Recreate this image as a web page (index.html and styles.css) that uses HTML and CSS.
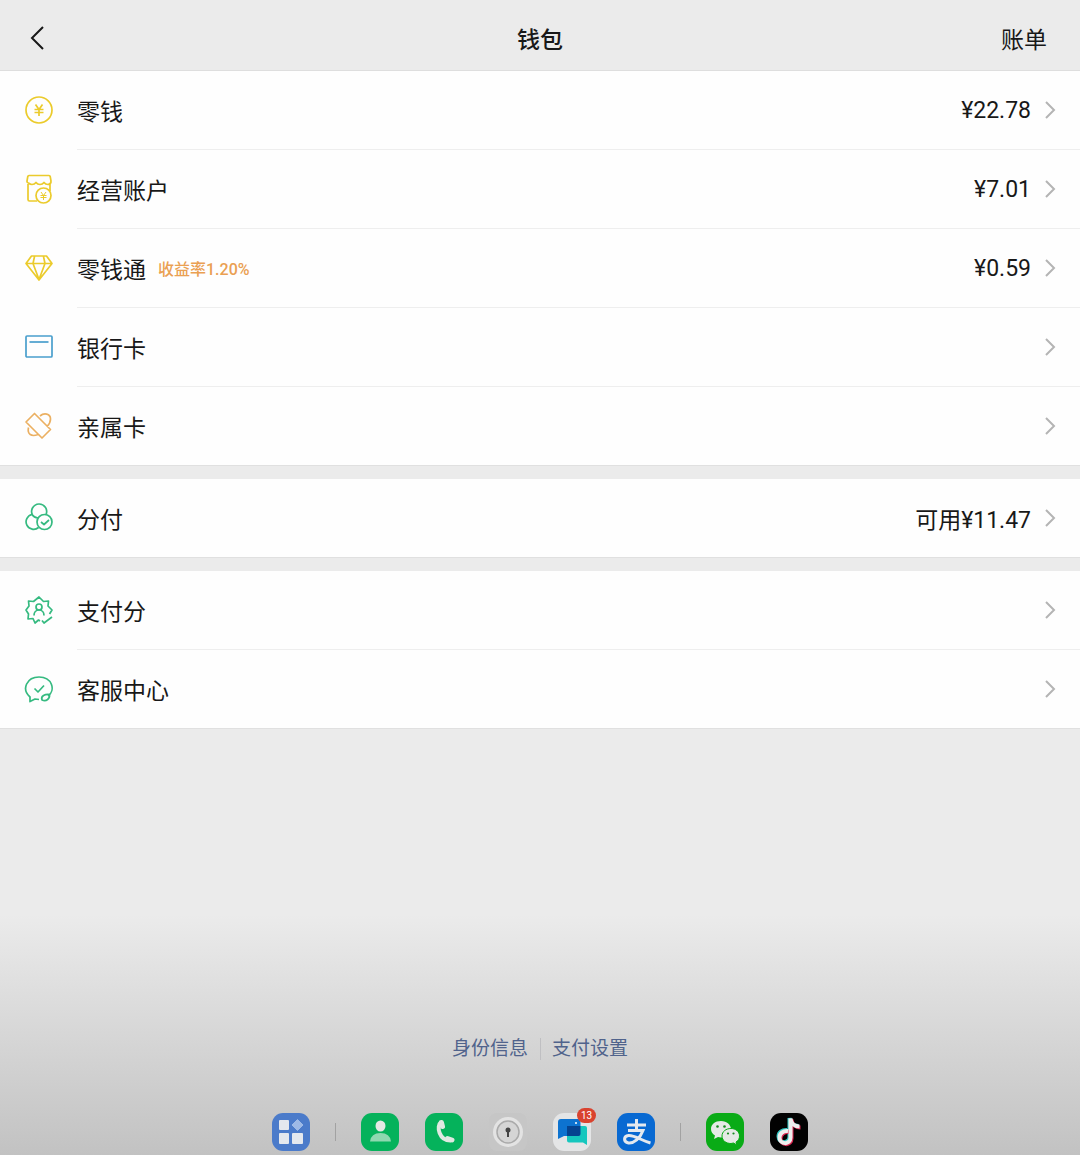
FILE: index.html
```html
<!DOCTYPE html>
<html lang="zh-CN">
<head>
  <meta charset="UTF-8">
  <meta name="viewport" content="width=device-width, initial-scale=1">
  <title>钱包</title>
  <link rel="stylesheet" href="styles.css">
</head>
<body>
  <svg class="defs" aria-hidden="true">
    <symbol id="chevron" viewBox="0 0 12 20">
      <path d="M2 2l8 8-8 8" fill="none" stroke="currentColor" stroke-width="2"/>
    </symbol>
  </svg>

  <header class="header">
    <button class="back" aria-label="返回">
      <svg width="16" height="26" viewBox="0 0 16 26"><path d="M14 2L3 13l11 11" fill="none" stroke="currentColor" stroke-width="2"/></svg>
    </button>
    <h1 class="title">钱包</h1>
    <a class="bill" href="#">账单</a>
  </header>

  <main class="main">
    <nav class="group">
      <a class="row" href="#">
        <svg class="icon yellow" viewBox="0 0 30 30"><circle cx="15" cy="15" r="13"/><path d="M11.5 9.5l3.5 5 3.5-5M15 14.5V21M10.5 14.5h9M10.5 17.5h9"/></svg>
        <span class="cell"><span class="label">零钱</span><span class="value">¥22.78</span><svg class="arrow"><use href="#chevron"/></svg></span>
      </a>
      <a class="row" href="#">
        <svg class="icon yellow" viewBox="0 0 30 30"><path d="M13 27H5.5Q4 27 4 25.500V10M26 10v7M5 1.500h20q1 0 1.200 1l.8 4.500q.3 3-3 3.500-2.500 0-4-2-1.500 2-4 2t-4-2q-1.500 2-4 2-2 0-3.200-1.300Q2.700 8.500 3 7l.8-4.500q.2-1 1.200-1z"/><circle cx="19.500" cy="21.500" r="7.500"/><path class="thin" d="M17 18l2.500 3.500L22 18M19.500 21.500V26M16.500 21.500h6M16.500 23.500h6"/></svg>
        <span class="cell"><span class="label">经营账户</span><span class="value">¥7.01</span><svg class="arrow"><use href="#chevron"/></svg></span>
      </a>
      <a class="row" href="#">
        <svg class="icon yellow" viewBox="0 0 30 30"><path d="M7.500 3h15L28 10.500 15 27 2 10.500zM2 10.500h26M10.500 3.500L9 10.500l6 16 6-16-1.500-7"/></svg>
        <span class="cell"><span class="label">零钱通</span><span class="rate">收益率1.20%</span><span class="value">¥0.59</span><svg class="arrow"><use href="#chevron"/></svg></span>
      </a>
      <a class="row" href="#">
        <svg class="icon blue" viewBox="0 0 30 30"><rect x="2" y="4" width="26" height="21" rx="1"/><path d="M5.500 10h19"/></svg>
        <span class="cell"><span class="label">银行卡</span><svg class="arrow"><use href="#chevron"/></svg></span>
      </a>
      <a class="row" href="#">
        <svg class="icon orange" viewBox="0 0 30 30"><path d="M2 11l8.500-8.500 16 16L18 27zM22.500 14.500l4 4-8.500 8.500-3.500-3.500M16 5c4-3.500 10.500-2.500 10.500 3 0 3-1 5-3.500 7.500M4.500 16.500c-1.500 7 3 9.500 9.500 7"/></svg>
        <span class="cell"><span class="label">亲属卡</span><svg class="arrow"><use href="#chevron"/></svg></span>
      </a>
    </nav>

    <nav class="group">
      <a class="row" href="#">
        <svg class="icon green" viewBox="0 0 30 30"><path d="M8.500 12a7.500 7.500 0 1 1 13.500-.5M8 11.500a7.500 7.500 0 1 0 6.500 13M8 11.500q2 3 6 3.500"/><circle cx="20.500" cy="19" r="7.500"/><path d="M17 19l3 2.500 5-4.500"/></svg>
        <span class="cell"><span class="label">分付</span><span class="value">可用¥11.47</span><svg class="arrow"><use href="#chevron"/></svg></span>
      </a>
    </nav>

    <nav class="group">
      <a class="row" href="#">
        <svg class="icon green" viewBox="0 0 30 30"><path d="M16 26l-1.500-1-3.500 3-2-4.500-5 .5.500-5L2 15l3-4-.5-5 5 .5L15 2l4.500 4.500 5-.5-.5 5 4 4-2.500 4M18 25.500l2 2.500 8-6"/><circle cx="15" cy="12" r="3"/><path d="M10 20.500c0-3 2-5.500 5-5.500s5 2.500 5 5.500"/></svg>
        <span class="cell"><span class="label">支付分</span><svg class="arrow"><use href="#chevron"/></svg></span>
      </a>
      <a class="row" href="#">
        <svg class="icon green" viewBox="0 0 30 30"><path d="M15 25.500l-4-.5-5 2.500V23C-3 15 3 3 15 3c13 0 17 13 9 19M10.500 14.500l3.500 3.500 6-6.500"/><path d="M18 26c-1.500-4 3-6 7.500-5.500.5 4-3 7.500-7.500 5.500z"/></svg>
        <span class="cell"><span class="label">客服中心</span><svg class="arrow"><use href="#chevron"/></svg></span>
      </a>
    </nav>
  </main>

  <footer class="footer">
    <div class="links">
      <a href="#">身份信息</a>
      <a href="#">支付设置</a>
    </div>

    <div class="dock">
      <button class="app" aria-label="应用">
        <svg viewBox="0 0 40 40"><rect x="1" y="1" width="38" height="38" rx="11" fill="#4b7bca"/><g fill="#e4e8ee"><rect x="8" y="8" width="10" height="10" rx="1"/><rect x="8" y="21" width="10" height="11" rx="1"/><rect x="21" y="21" width="11" height="11" rx="1"/></g><path d="M26.500 7.500l5.500 5.500-5.500 5.500L21 13z" fill="#9db9e6" stroke="#9db9e6" stroke-linejoin="round"/></svg>
      </button>
      <span class="bar"></span>
      <button class="app" aria-label="联系人">
        <svg viewBox="0 0 40 40"><rect x="1" y="1" width="38" height="38" rx="11" fill="#05b25b"/><ellipse cx="20.500" cy="14" rx="5" ry="5.500" fill="#e4e8e4"/><path d="M10 29.500q1-8.500 10.500-8.500T31 29.500z" fill="#8fd8b0"/></svg>
      </button>
      <button class="app" aria-label="电话">
        <svg viewBox="0 0 40 40"><rect x="1" y="1" width="38" height="38" rx="11" fill="#05b25b"/><path d="M17 10c-5 4-2 19 10 18.500" fill="none" stroke="#e0e8e1" stroke-width="4"/><path d="M17.500 10.500l1 4M23.500 26.500l4.500 1.500" fill="none" stroke="#e0e8e1" stroke-width="5" stroke-linecap="round"/></svg>
      </button>
      <button class="app" aria-label="密码">
        <svg viewBox="0 0 40 40"><rect x="1" y="1" width="38" height="38" rx="8" fill="#c6c6c6"/><circle cx="20" cy="20" r="15" fill="#e3e3e3"/><circle cx="20" cy="20" r="11" fill="#d5d5d5" stroke="#aaa" stroke-width="1.500"/><circle cx="20" cy="18" r="2.500" fill="#444"/><path d="M20 18v7" stroke="#444" stroke-width="2"/></svg>
      </button>
      <button class="app" aria-label="消息">
        <svg viewBox="0 0 40 40"><rect x="1" y="1" width="38" height="38" rx="11" fill="#e4e5e6"/><path d="M6 27V10q0-3 3-3h17q2.500 0 2.500 2.500V24H12z" fill="#0d73d0"/><path d="M15 14h18q2 0 2 2v17l-4-2.500H17q-2 0-2-2z" fill="#16c7be"/><path d="M15 14h13.500v8q0 2-2 2H15z" fill="#054390"/><circle cx="24" cy="11" r="1" fill="#fff"/></svg>
        <span class="badge">13</span>
      </button>
      <button class="app" aria-label="支付宝">
        <svg viewBox="0 0 40 40"><rect x="1" y="1" width="38" height="38" rx="11" fill="#0869d2"/><path d="M11 13h19M20.500 7v11M12 18.500h15c-3 8-9 13-14.500 12.500-5.500-1-5-7 0-7.500 6-.5 13 5 22 7.500" fill="none" stroke="#e4e9ef" stroke-width="3"/></svg>
      </button>
      <span class="bar"></span>
      <button class="app" aria-label="微信">
        <svg viewBox="0 0 40 40"><rect x="1" y="1" width="38" height="38" rx="11" fill="#09ab16"/><path d="M16 9C10 9 6 12.500 6 17c0 3 1.500 5 4 6.500L9 27l4-2 3 .5c6 0 10-3.500 10-8S22 9 16 9z" fill="#e5eae5"/><path d="M26 16.500c-5 0-9 3-9 7.500s4 7.500 9 7.500l2.500-.5 3.500 2-1-3c2.500-1.500 3.500-3.500 3.500-6 0-4.500-4-7.500-8.500-7.500z" fill="#e5eae5" stroke="#09ab16"/><g fill="#178a20"><circle cx="12.500" cy="14.500" r="1.300"/><circle cx="19.500" cy="14.500" r="1.300"/><circle cx="23" cy="21.500" r="1.100"/><circle cx="28.500" cy="21.500" r="1.100"/></g></svg>
      </button>
      <button class="app" aria-label="抖音">
        <svg viewBox="0 0 40 40"><rect x="1" y="1" width="38" height="38" rx="11" fill="#020202"/><g fill="none" stroke-width="4"><path d="M18 18c-5-.5-8.500 2.500-8.500 6.500 0 7 11 8 11 0V6c.5 4.500 4 8 9 8" stroke="#32c8c4"/><path d="M20 20c-5-.5-8.500 2.500-8.500 6.500 0 7 11 8 11 0V7.500c.5 4.500 4 8 9 8" stroke="#dc2852"/><path d="M19 19c-5-.5-8.500 2.500-8.500 6.500 0 7 11 8 11 0V6.500c.5 4.500 4 8 9 8" stroke="#eee"/></g></svg>
      </button>
    </div>
  </footer>
</body>
</html>
```
FILE: styles.css
```css
* {
  box-sizing: border-box;
}
body {
  margin: 0;
  min-height: 100vh;
  display: flex;
  flex-direction: column;
  font-family: Roboto, "Noto Sans CJK SC", sans-serif;
  font-size: 23px;
  color: #181818;
  background: linear-gradient(to top, #c2c2c2, #ebebeb 240px);
}
a {
  color: inherit;
  text-decoration: none;
}
button {
  padding: 0;
  border: 0;
  background: none;
  color: inherit;
  font: inherit;
}
svg {
  display: block;
}
.defs {
  display: none;
}
.header {
  display: grid;
  grid-template-columns: 1fr auto 1fr;
  align-items: center;
  height: 71px;
  padding: 6px 33px 0;
  border-bottom: 1px solid #dedede;
}
.back {
  justify-self: start;
  margin-left: -4px;
}
.title {
  margin: 0;
  font-size: 23px;
  font-weight: 500;
}
.bill {
  justify-self: end;
}
.main {
  display: grid;
  gap: 13px;
}
.group {
  background: #fefefe;
  border-bottom: 1px solid #e0e0e0;
}
.row {
  display: flex;
  align-items: flex-end;
  gap: 23px;
  padding-left: 24px;
}
.icon {
  width: 30px;
  height: 78px;
  fill: none;
  stroke: currentColor;
  stroke-width: 1.7;
  stroke-linejoin: round;
}
.thin {
  stroke-width: 1;
}
.yellow { color: #ebcb2c; }
.blue { color: #4a9fcd; }
.orange { color: #ebb062; }
.green { color: #35ba80; }
.cell {
  flex: 1;
  display: flex;
  align-items: center;
  height: 78px;
  padding-right: 24px;
}
.row + .row .cell {
  height: 79px;
  border-top: 1px solid #eee;
}
.rate {
  margin-left: 12px;
  font-size: 16px;
  font-weight: 500;
  color: #eaa052;
}
.value {
  margin-left: auto;
}
.arrow {
  width: 12px;
  height: 20px;
  margin-left: auto;
  color: #b4b4b4;
}
.value + .arrow {
  margin-left: 13px;
}
.footer {
  margin-top: auto;
}
.links {
  display: flex;
  justify-content: center;
  margin-bottom: 52px;
  font-size: 19px;
  line-height: 22px;
  color: #50638c;
}
.links a {
  padding: 0 12px;
}
.links a + a {
  padding-left: 11px;
  border-left: 1px solid #bfbfc2;
}
.dock {
  display: flex;
  justify-content: center;
  align-items: center;
  gap: 24px;
  padding-bottom: 3px;
}
.app {
  position: relative;
  width: 40px;
  height: 40px;
}
.bar {
  width: 1px;
  height: 18px;
  background: #a2a2a2;
}
.badge {
  position: absolute;
  top: -4px;
  right: -4px;
  width: 19px;
  border-radius: 8px;
  background: #d9432f;
  color: #fff;
  font-size: 10px;
  line-height: 15px;
  text-align: center;
}
```
